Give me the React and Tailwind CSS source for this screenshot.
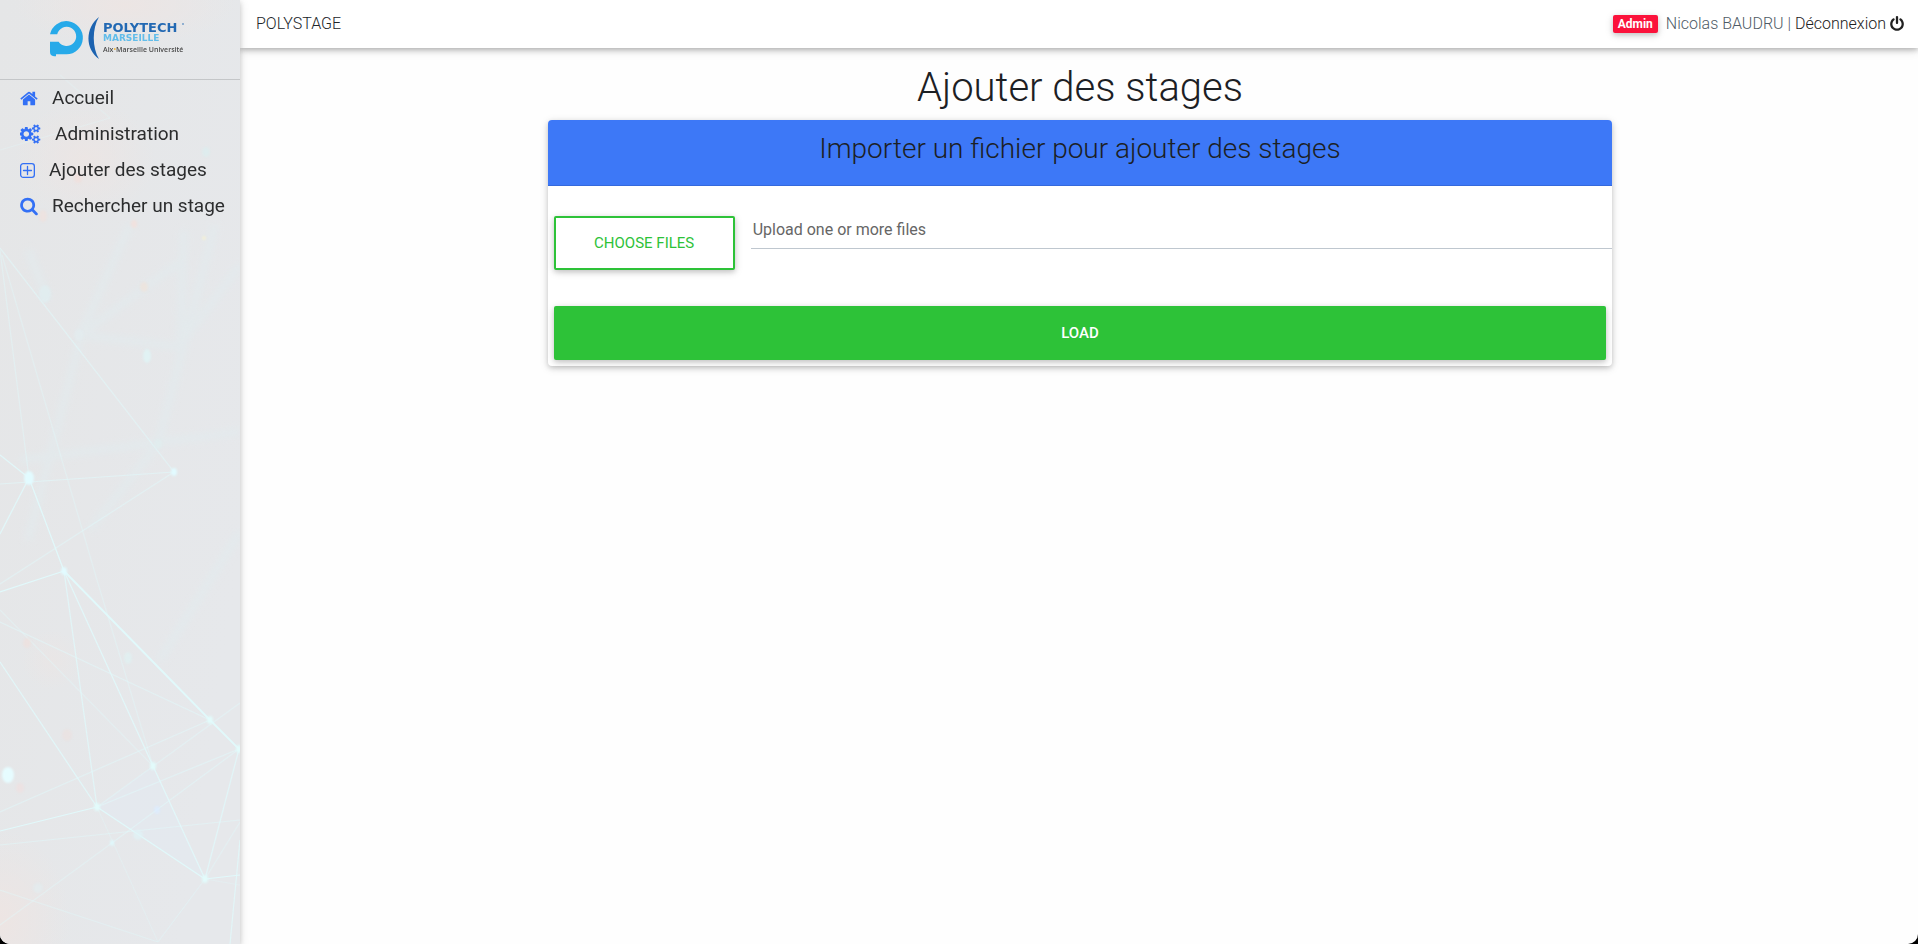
import { useRef, useState } from "react";

const LINES = [
  [0, 248, 174, 472, 0.6], [0, 250, 29, 478, 0.45], [2, 255, 97, 580, 0.4], [97, 580, 153, 766, 0.4],
  [0, 484, 174, 472, 0.6], [0, 584, 174, 472, 0.5], [0, 455, 29, 478, 0.9], [29, 478, 0, 534, 0.9],
  [29, 478, 64, 571, 1], [64, 571, 0, 592, 1], [64, 571, 153, 766, 0.9], [153, 766, 205, 879, 0.9],
  [64, 571, 97, 807, 0.8], [0, 662, 97, 807, 0.9], [97, 807, 0, 831, 1], [97, 807, 205, 879, 1],
  [205, 879, 239, 749, 0.8], [205, 879, 240, 875, 1], [0, 622, 210, 720, 0.5], [0, 610, 153, 766, 0.4],
  [0, 812, 210, 720, 0.5], [97, 807, 240, 703, 0.45], [97, 807, 239, 749, 0.55], [112, 843, 239, 749, 0.5],
  [112, 843, 0, 925, 0.4], [0, 845, 240, 820, 0.5], [97, 807, 158, 942, 0.3], [158, 942, 205, 879, 0.4],
  [0, 890, 158, 942, 0.4], [205, 879, 240, 822, 0.4], [205, 879, 240, 885, 0.3], [240, 840, 230, 944, 0.8],
  [0, 150, 110, 118, 0.3], [60, 75, 110, 118, 0.25],
];

const HAZE = [
  [80, 335, 182, 347], [80, 335, 180, 262], [180, 345, 240, 265], [158, 444, 184, 344],
  [80, 340, 28, 540], [28, 250, 48, 300], [80, 335, 130, 225], [184, 230, 180, 350],
  [158, 444, 90, 530], [160, 660, 240, 532], [184, 344, 215, 225], [20, 460, 240, 432],
];

const DOTS = [
  [29, 478, 5, 7, "#e2fbff", 1], [174, 472, 3, 4, "#e2fbff", 1], [64, 571, 3, 4, "#e2fbff", 1],
  [8, 775, 6, 8, "#e6fcff", 1], [210, 720, 3, 4, "#e2fbfb", 1], [153, 766, 3, 4, "#e2fbfb", 1],
  [97, 807, 3, 4, "#e2fbfb", 1], [205, 879, 3, 4, "#e2fbfb", 1], [239, 749, 3, 4, "#e2fbfb", 1],
  [112, 843, 2, 3, "#e0f8fc", 1], [157, 810, 3, 4, "#dcecff", 0.8], [147, 356, 4, 7, "#e0f3f5", 0.9],
  [45, 294, 6, 9, "#e0eef0", 0.8], [128, 658, 4, 6, "#e0f0f1", 0.8], [158, 444, 4, 5, "#e0eef0", 0.7],
  [79, 335, 5, 6, "#e2edf0", 0.7], [138, 835, 5, 5, "#e0f3f6", 0.7], [38, 888, 5, 5, "#e2edef", 0.7],
  [134, 224, 3, 4, "#f5dfda", 0.7], [43, 216, 4, 6, "#f5dfda", 0.5], [78, 178, 4, 5, "#f5dcd8", 0.5],
  [144, 287, 4, 5, "#eee3dc", 0.8], [27, 643, 4, 5, "#f0e0dd", 0.7], [67, 735, 5, 6, "#ebe1e0", 0.7],
  [20, 788, 4, 5, "#f0e0e0", 0.7], [206, 152, 4, 5, "#dceef0", 0.7], [204, 238, 2, 2, "#f3f0d8", 1],
];

function Constellation() {
  return (
    <svg
      aria-hidden="true"
      viewBox="0 0 240 944"
      preserveAspectRatio="xMidYMin slice"
      className="absolute inset-0 h-full w-full"
    >
      <defs>
        <filter id="soft" x="-50%" y="-50%" width="200%" height="200%"><feGaussianBlur stdDeviation="1" /></filter>
        <filter id="wide" x="-50%" y="-50%" width="200%" height="200%"><feGaussianBlur stdDeviation="3" /></filter>
        <radialGradient id="warm">
          <stop offset="0" stopColor="#ede5e3" />
          <stop offset="1" stopColor="#ede5e3" stopOpacity="0" />
        </radialGradient>
        <linearGradient id="base" x1="0" y1="0" x2="1" y2="0.6">
          <stop offset="0" stopColor="#e5e6e7" />
          <stop offset="1" stopColor="#e6e8eb" />
        </linearGradient>
      </defs>
      <rect width="240" height="944" fill="url(#base)" />
      <ellipse cx="125" cy="5" rx="110" ry="40" fill="url(#warm)" opacity="0.9" />
      <ellipse cx="85" cy="160" rx="70" ry="60" fill="url(#warm)" opacity="0.8" />
      <ellipse cx="52" cy="660" rx="30" ry="30" fill="url(#warm)" opacity="0.5" />
      <ellipse cx="0" cy="920" rx="70" ry="90" fill="url(#warm)" />
      <polygon points="97,807 153,766 205,879" fill="#e2eaf0" opacity="0.6" />
      <g stroke="#e2ebee" strokeWidth="8" opacity="0.6" filter="url(#wide)">
        {HAZE.map(([x1, y1, x2, y2], i) => <line key={i} x1={x1} y1={y1} x2={x2} y2={y2} />)}
      </g>
      <g stroke="#e1f9fb" strokeWidth="1.2">
        {LINES.map(([x1, y1, x2, y2, o], i) => <line key={i} x1={x1} y1={y1} x2={x2} y2={y2} opacity={o} />)}
        <path d="M64 571L210 720L240 750" fill="none" strokeWidth="1.8" />
      </g>
      <g filter="url(#soft)">
        {DOTS.map(([cx, cy, rx, ry, fill, o], i) => (
          <ellipse key={i} cx={cx} cy={cy} rx={rx} ry={ry} fill={fill} opacity={o} />
        ))}
      </g>
    </svg>
  );
}

function Logo() {
  return (
    <svg role="img" aria-label="Polytech Marseille, Aix-Marseille Université" viewBox="0 0 140 43" className="h-[43px] w-[140px]">
      <path
        d="M0 17.300A16.600 16.600 0 1 1 16.500 37.300H6V39.300H4Q0 38.800 0 35V24.700H8.600A9.600 9.600 0 1 0 7.200 17.300Z"
        fill="#27aae9"
      />
      <path d="M49 0C35 11 35 32 49 42C42 31 42 11 49 0Z" fill="#1c63b0" />
      <circle cx="133" cy="7" r="0.800" fill="#2369b3" />
      <text x="53" y="15" fontFamily="DejaVu Sans, sans-serif" fontSize="13" fontWeight="700" fill="#2369b3">POLYTECH</text>
      <text x="53" y="24" fontFamily="DejaVu Sans, sans-serif" fontSize="9" fontWeight="700" fill="#62bdea">MARSEILLE</text>
      <text x="53" y="35" fontFamily="Open Sans, sans-serif" fontSize="7" fontWeight="600" fill="#4a4a4a">
        Aix<tspan fill="#f2b632">•</tspan>Marseille Université
      </text>
    </svg>
  );
}

function HomeIcon() {
  return (
    <svg aria-hidden="true" viewBox="64 0 1664 1792" fill="currentColor" className="h-[19px] w-[18px]">
      <path d="M1472 992v480q0 26-19 45t-45 19h-384v-384h-256v384h-384q-26 0-45-19t-19-45v-480q0-1 .5-3t.5-3l575-474 575 474q1 2 1 6zm223-69l-62 74q-8 9-21 11h-3q-13 0-21-7l-692-577-692 577q-12 8-24 7-13-2-21-11l-62-74q-8-10-7-23.500t11-21.500l719-599q32-26 76-26t76 26l244 204v-195q0-14 9-23t23-9h192q14 0 23 9t9 23v408l219 182q10 8 11 21.500t-7 23.500z" />
    </svg>
  );
}

function CogsIcon() {
  return (
    <svg aria-hidden="true" viewBox="0 0 1920 1792" fill="currentColor" className="h-5 w-[21px]">
      <path d="M832 896q0-106-75-181t-181-75-181 75-75 181 75 181 181 75 181-75 75-181zm768 512q0-52-38-90t-90-38-90 38-38 90q0 53 37.500 90.500t90.500 37.500 90.500-37.500 37.500-90.500zm0-1024q0-52-38-90t-90-38-90 38-38 90q0 53 37.500 90.500t90.500 37.500 90.500-37.500 37.500-90.500zm-384 421v185q0 10-7 19.500t-16 10.500l-155 24q-11 35-32 76 34 48 90 115 7 11 7 20 0 12-7 19-23 30-82.500 89.500t-78.500 59.500q-11 0-21-7l-115-90q-37 19-77 31-11 108-23 155-7 24-30 24h-186q-11 0-20-7.500t-10-17.500l-23-153q-34-10-75-31l-118 89q-7 7-20 7-11 0-21-8-144-133-144-160 0-9 7-19 10-14 41-53t47-61q-23-44-35-82l-152-24q-10-1-17-9.500t-7-19.500v-185q0-10 7-19.500t16-10.500l155-24q11-35 32-76-34-48-90-115-7-11-7-20 0-12 7-20 22-30 82-89t79-59q11 0 21 7l115 90q34-18 77-32 11-108 23-154 7-24 30-24h186q11 0 20 7.500t10 17.500l23 153q34 10 75 31l118-89q8-7 20-7 11 0 21 8 144 133 144 160 0 8-7 19-12 16-42 54t-45 60q23 48 34 82l152 23q10 2 17 10.500t7 19.500zm640 533v140q0 16-149 31-12 27-30 52 51 113 51 138 0 4-4 7-122 71-124 71-8 0-46-47t-52-68q-20 2-30 2t-30-2q-14 21-52 68t-46 47q-2 0-124-71-4-3-4-7 0-25 51-138-18-25-30-52-149-15-149-31v-140q0-16 149-31 13-29 30-52-51-113-51-138 0-4 4-7 4-2 35-20t59-34 30-16q8 0 46 46.500t52 67.500q20-2 30-2t30 2q51-71 92-112l6-2q4 0 124 70 4 3 4 7 0 25-51 138 17 23 30 52 149 15 149 31zm0-1024v140q0 16-149 31-12 27-30 52 51 113 51 138 0 4-4 7-122 71-124 71-8 0-46-47t-52-68q-20 2-30 2t-30-2q-14 21-52 68t-46 47q-2 0-124-71-4-3-4-7 0-25 51-138-18-25-30-52-149-15-149-31v-140q0-16 149-31 13-29 30-52-51-113-51-138 0-4 4-7 4-2 35-20t59-34 30-16q8 0 46 46.500t52 67.500q20-2 30-2t30 2q51-71 92-112l6-2q4 0 124 70 4 3 4 7 0 25-51 138 17 23 30 52 149 15 149 31z" />
    </svg>
  );
}

function PlusSquareIcon() {
  return (
    <svg aria-hidden="true" viewBox="0 0 15 15" fill="none" stroke="currentColor" strokeWidth="1.300" strokeLinecap="round" className="size-[15px]">
      <rect x="0.650" y="0.650" width="13.700" height="13.700" rx="2.600" />
      <path d="M7.500 3.500V11.500M3.500 7.500H11.500" />
    </svg>
  );
}

function SearchIcon() {
  return (
    <svg aria-hidden="true" viewBox="64 64 1664 1792" fill="currentColor" className="h-[19px] w-[18px]">
      <path d="M1216 832q0-185-131.500-316.500t-316.500-131.500-316.500 131.500-131.500 316.500 131.500 316.500 316.500 131.500 316.500-131.500 131.500-316.500zm512 832q0 52-38 90t-90 38q-54 0-90-38l-343-342q-179 124-399 124-143 0-273.500-55.500t-225-150-150-225-55.500-273.500 55.500-273.500 150-225 225-150 273.500-55.500 273.500 55.500 225 150 150 225 55.500 273.500q0 220-124 399l343 343q37 37 37 90z" />
    </svg>
  );
}

function PowerIcon() {
  return (
    <svg aria-hidden="true" viewBox="128 0 1536 1792" fill="currentColor" className="h-4 w-[14px]">
      <path d="M1664 896q0 156-61 298t-164 245-245 164-298 61-298-61-245-164-164-245-61-298q0-182 80.500-343t226.500-270q43-32 95.500-25t83.500 50q32 42 24.500 94.500t-49.500 84.500q-98 74-151.500 181t-53.500 228q0 104 40.500 198.500t109.500 163.500 163.500 109.500 198.500 40.500 198.500-40.500 163.500-109.500 109.500-163.500 40.500-198.500q0-121-53.500-228t-151.500-181q-42-32-49.500-84.500t24.500-94.500q31-43 84-50t95 25q146 109 226.500 270t80.500 343zm-640-768v640q0 52-38 90t-90 38-90-38-38-90v-640q0-52 38-90t90-38 90 38 38 90z" />
    </svg>
  );
}

const NAV = [
  { label: "Accueil", Icon: HomeIcon },
  { label: "Administration", Icon: CogsIcon },
  { label: "Ajouter des stages", Icon: PlusSquareIcon },
  { label: "Rechercher un stage", Icon: SearchIcon },
];

function Sidebar() {
  return (
    <aside className="relative z-10 w-60 shrink-0 shadow-[0_2px_5px_rgba(0,0,0,0.16),0_2px_10px_rgba(0,0,0,0.12)]">
      <Constellation />
      <div className="relative">
        <div className="flex h-20 justify-center border-b border-[#c4c6c8] pt-[17px]">
          <Logo />
        </div>
        <nav>
          {NAV.map(({ label, Icon }) => (
            <a key={label} href="#" className="flex h-9 items-center gap-3.5 pl-5 text-[19px] whitespace-nowrap text-[#2c2d2e]">
              <span className="text-[#3370f5]"><Icon /></span>
              {label}
            </a>
          ))}
        </nav>
      </div>
    </aside>
  );
}

function TopBar() {
  return (
    <header className="flex h-12 items-center justify-between bg-white pr-3.5 pl-4 font-light shadow-[0_2px_5px_rgba(0,0,0,0.22),0_2px_10px_rgba(0,0,0,0.14)]">
      <a href="#" className="text-[#212529]">POLYSTAGE</a>
      <div className="flex items-center">
        <span className="mr-2 rounded-[2px] bg-[#fb123b] px-[5px] text-xs leading-[18px] font-bold text-white shadow-[0_2px_5px_rgba(0,0,0,0.16),0_2px_10px_rgba(0,0,0,0.12)]">
          Admin
        </span>
        <span className="text-[#4f5b66]">Nicolas BAUDRU |</span>
        <a href="#" className="ml-1 flex items-center gap-1 text-[#212121]">
          Déconnexion <PowerIcon />
        </a>
      </div>
    </header>
  );
}

function UploadCard() {
  const picker = useRef(null);
  const [names, setNames] = useState("");

  return (
    <section className="col-span-8 col-start-3 rounded bg-white shadow-[0_2px_5px_rgba(0,0,0,0.16),0_2px_10px_rgba(0,0,0,0.12)]">
      <h2 className="rounded-t border-b border-[#3569dc] bg-[#3d78f7] pt-3 pb-5 text-center text-[28px] leading-[33px] font-light text-[#1c2024]">
        Importer un fichier pour ajouter des stages
      </h2>
      <form onSubmit={(e) => e.preventDefault()}>
        <div className="flex items-start gap-2.5 pt-6">
          <button
            type="button"
            onClick={() => picker.current.click()}
            className="m-1.5 h-[54px] w-[181px] shrink-0 rounded-[2px] border-2 border-[#2dc238] bg-white text-[15px] text-[#2dc238] uppercase shadow-[0_2px_5px_rgba(0,0,0,0.16),0_2px_10px_rgba(0,0,0,0.12)]"
          >
            Choose files
          </button>
          <input
            ref={picker}
            type="file"
            multiple
            aria-label="Choose files"
            className="hidden"
            onChange={(e) => setNames(Array.from(e.target.files, (f) => f.name).join(", "))}
          />
          <input
            type="text"
            readOnly
            value={names}
            aria-label="Selected files"
            placeholder="Upload one or more files"
            className="h-[39px] min-w-0 flex-1 border-b border-[#bfc7cf] bg-transparent px-0.5 text-base text-[#495057] outline-none placeholder:text-[#666666]"
          />
        </div>
        <div className="flex p-1.5 pt-[30px]">
          <button
            type="submit"
            className="h-[54px] flex-1 rounded-[2px] bg-[#2dc238] text-[15px] font-medium text-white uppercase shadow-[0_2px_5px_rgba(0,0,0,0.16),0_2px_10px_rgba(0,0,0,0.12)]"
          >
            Load
          </button>
        </div>
      </form>
    </section>
  );
}

export default function App() {
  return (
    <div className="bg-black font-['Roboto',sans-serif]">
      <div className="flex min-h-screen overflow-hidden rounded-b-[10px] bg-[#fefefe]">
        <Sidebar />
        <div className="min-w-0 flex-1">
          <TopBar />
          <main className="pt-4 pr-8 pl-[34px]">
            <h1 className="mb-2 text-center text-[40px] leading-[48px] font-light text-[#1c2024]">Ajouter des stages</h1>
            <div className="grid grid-cols-12 gap-x-[30px]">
              <UploadCard />
            </div>
          </main>
        </div>
      </div>
    </div>
  );
}
